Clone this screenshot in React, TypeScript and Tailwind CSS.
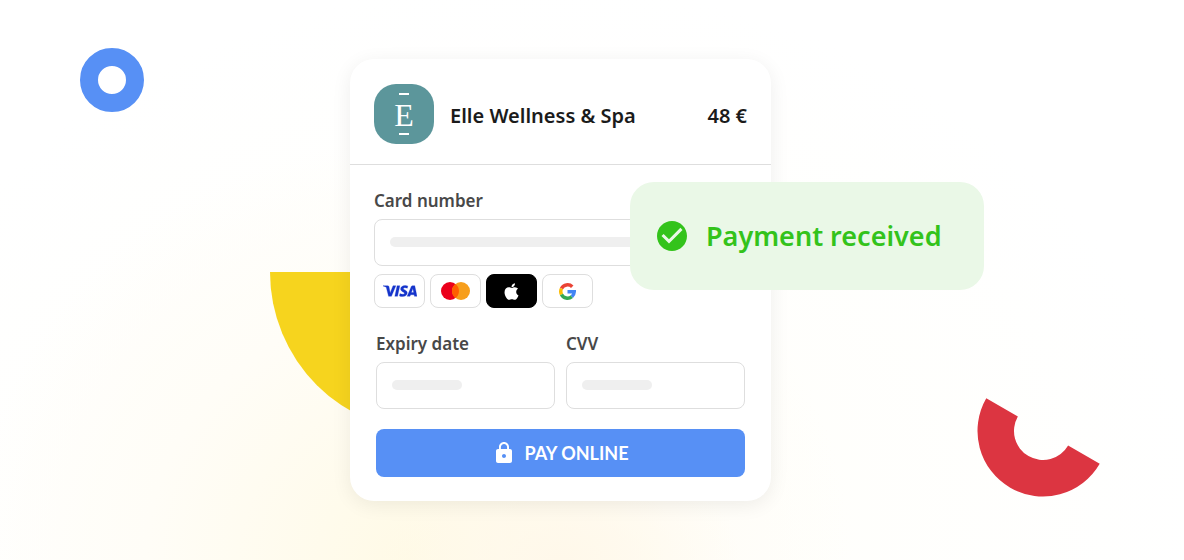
import { FaApple } from "react-icons/fa";
import { MdCheckCircle, MdLock } from "react-icons/md";
import { SiVisa } from "react-icons/si";

export default function App() {
  return (
    <main className="relative min-h-screen overflow-hidden flex items-center justify-center pr-[63px] bg-white bg-[radial-gradient(ellipse_180px_110px_at_560px_100%,#fff8ea,transparent),radial-gradient(ellipse_440px_420px_at_410px_100%,#fffae6,#fffdf7_60%,transparent),radial-gradient(ellipse_700px_580px_at_520px_100%,#fffef9,transparent)] font-['Noto_Sans','Open_Sans',sans-serif]">
      <Ring />
      <Arc />

      <div className="relative w-[421px]">
        {/* Half disc behind the card */}
        <div className="absolute left-[-80px] top-[213px] w-[320px] h-[160px] rounded-b-full bg-[#f6d41e]" />

        <Checkout />

        <div
          role="status"
          className="absolute left-[280px] top-[123px] w-[354px] h-[108px] rounded-3xl bg-[#eaf8e7] pl-6 flex items-center gap-4 text-[#33c31b]"
        >
          <MdCheckCircle size={36} className="shrink-0" />
          <span className="text-[27px] leading-9 font-semibold whitespace-nowrap">Payment received</span>
        </div>
      </div>
    </main>
  );
}

function Checkout() {
  return (
    <form
      onSubmit={(e) => e.preventDefault()}
      className="relative rounded-3xl bg-white shadow-[0_4px_20px_rgba(0,0,0,0.07)]"
    >
      <header className="flex items-center px-6 pt-[25px] pb-5 border-b border-[#dedede]">
        <Logo />
        <h1 className="ml-4 mt-1 text-xl font-semibold text-[#1b1b1b]">Elle Wellness &amp; Spa</h1>
        <span className="ml-auto mt-1 text-xl font-semibold text-[#1b1b1b]">48 €</span>
      </header>

      <div className="px-6 pt-6 pb-6">
        <Field id="card" label="Card number" bar="w-[340px]" />

        <div className="mt-2 flex gap-[5px]">
          <Method label="Visa">
            <SiVisa size={34} color="#1434cb" stroke="#1434cb" strokeWidth={0.2} />
          </Method>
          <Method label="Mastercard">
            <svg width="29" height="18" viewBox="0 0 29 18">
              <circle cx="9" cy="9" r="9" fill="#eb001b" />
              <circle cx="20" cy="9" r="9" fill="#f79e1b" />
              <path d="M14.5 1.88a9 9 0 0 1 0 14.24 9 9 0 0 1 0-14.24z" fill="#ff5f00" />
            </svg>
          </Method>
          <Method label="Apple Pay" dark>
            <FaApple size={19} color="#fff" />
          </Method>
          <Method label="Google Pay">
            <GoogleIcon />
          </Method>
        </div>

        <div className="mt-6 px-0.5">
          <div className="grid grid-cols-2 gap-[11px]">
            <Field id="expiry" label="Expiry date" bar="w-[70px]" />
            <Field id="cvv" label="CVV" bar="w-[70px]" />
          </div>
          <button
            type="submit"
            className="mt-5 w-full h-12 rounded-lg bg-[#5790f5] text-white flex items-center justify-center gap-2"
          >
            <MdLock size={24} />
            <span className="text-[18px] font-bold font-['Lato',sans-serif]">PAY ONLINE</span>
          </button>
        </div>
      </div>
    </form>
  );
}

function Field({ id, label, bar }: { id: string; label: string; bar: string }) {
  return (
    <div>
      <label htmlFor={id} className="block text-[17px] leading-6 font-semibold text-[#484848]">
        {label}
      </label>
      <div className="relative mt-1.5">
        <input id={id} className="block w-full h-[47px] px-4 rounded-lg border border-[#dedede] bg-white outline-none" />
        <span className={`absolute left-4 top-[18px] h-2.5 rounded-full bg-[#efefef] pointer-events-none ${bar}`} />
      </div>
    </div>
  );
}

function Method({ label, dark, children }: { label: string; dark?: boolean; children: React.ReactNode }) {
  return (
    <button
      type="button"
      aria-label={label}
      className={`w-[51px] h-[34px] rounded-lg border flex items-center justify-center ${
        dark ? "bg-black border-black" : "bg-white border-[#dedede]"
      }`}
    >
      {children}
    </button>
  );
}

function GoogleIcon() {
  return (
    <svg width="17" height="17" viewBox="0 0 34 34" fill="none" strokeWidth="7">
      <path stroke="#ea4335" d="M26.5 7.5A13.5 13.5 0 0 0 5 11" />
      <path stroke="#fbbc05" d="M5 11a13.5 13.5 0 0 0 0 12" />
      <path stroke="#34a853" d="M5 23a13.5 13.5 0 0 0 20.7 4.3" />
      <path stroke="#4285f4" d="M17 17.5h13.5a13.5 13.5 0 0 1-4.8 9.8" />
    </svg>
  );
}

function Logo() {
  return (
    <div className="w-[60px] h-[60px] shrink-0 rounded-[22px] bg-[#5c969b] text-white flex flex-col items-center justify-center">
      <span className="w-2.5 h-0.5 bg-white" />
      <span className="h-[38px] text-[32px] leading-[40px] font-['Liberation_Serif',serif]">E</span>
      <span className="w-2.5 h-0.5 bg-white" />
    </div>
  );
}

function Ring() {
  return <div className="absolute left-20 top-12 w-16 h-16 rounded-full border-[18px] border-[#5790f5]" />;
}

function Arc() {
  return (
    <svg className="absolute left-[977px] top-[365px]" width="132" height="132" viewBox="-66 -66 132 132">
      <path
        d="M-65.5 0A65.5 65.5 0 0 0 65.5 0H29A29 29 0 0 1-29 0z"
        transform="rotate(30)"
        fill="#dc3541"
      />
    </svg>
  );
}
